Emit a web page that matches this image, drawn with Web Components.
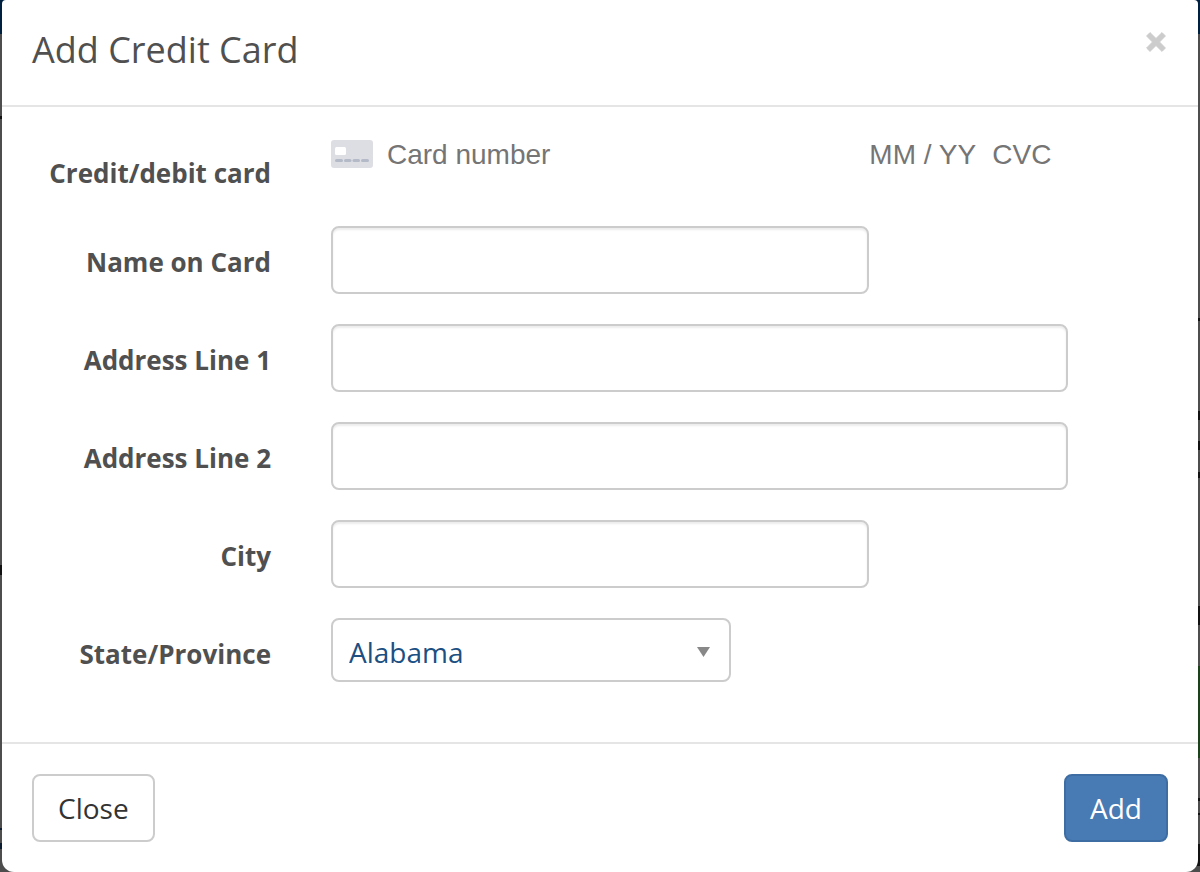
<!DOCTYPE html>
<html lang="en">
<head>
  <meta charset="utf-8">
  <meta name="viewport" content="width=device-width, initial-scale=1">
  <title>Add Credit Card</title>
  <style>
    body {
      margin: 0;
      padding: 0 2px;
      font-family: "Open Sans", sans-serif;
      color: #505050;
      background:
        linear-gradient(#00203f 0 34px, #4d4d4d 34px 116px, #111 116px 119px, #4d4d4d 119px 565px, #111 565px 575px, #4d4d4d 575px 828px, #0c1c30 828px 830px, #4d4d4d 830px 843px, #0c1c30 843px 849px, #4d4d4d 849px) left / 50% 100% no-repeat,
        linear-gradient(#00203f 0 34px, #4d4d4d 34px 318px, #111 318px 321px, #4d4d4d 321px 411px, #111 411px 420px, #4d4d4d 420px 441px, #111 441px 450px, #4d4d4d 450px 472px, #111 472px 478px, #4d4d4d 478px 606px, #111 606px 625px, #4d4d4d 625px 666px, #1d401d 666px 758px, #4d4d4d 758px 798px, #111 798px 801px, #4d4d4d 801px 813px, #111 813px 815px, #4d4d4d 815px 844px, #111 844px 866px, #4d4d4d 866px) right / 50% 100% no-repeat,
        #4d4d4d;
    }
  </style>
</head>
<body>
  <modal-dialog heading="Add Credit Card">
    <form-row label="Credit/debit card" span="8">
      <card-input></card-input>
    </form-row>
    <form-row label="Name on Card" span="6">
      <text-field label="Name on Card"></text-field>
    </form-row>
    <form-row label="Address Line 1" span="8">
      <text-field label="Address Line 1"></text-field>
    </form-row>
    <form-row label="Address Line 2" span="8">
      <text-field label="Address Line 2"></text-field>
    </form-row>
    <form-row label="City" span="6">
      <text-field label="City"></text-field>
    </form-row>
    <form-row label="State/Province" span="8">
      <select-field label="State/Province" options="Alabama,Alaska,Arizona,Arkansas,California"></select-field>
    </form-row>
    <modal-button slot="footer">Close</modal-button>
    <modal-button slot="footer" primary>Add</modal-button>
  </modal-dialog>

  <script>
    class ModalDialog extends HTMLElement {
      constructor() {
        super();
        this.attachShadow({ mode: 'open' });
      }

      connectedCallback() {
        this.shadowRoot.innerHTML = `
          <style>
            :host {
              display: block;
              background: #fff;
              border-radius: 4px 4px 12px 12px;
            }
            header {
              display: flex;
              justify-content: space-between;
              align-items: flex-start;
              padding: 24px 30px 29px;
              border-bottom: 2px solid #e5e5e5;
            }
            h1 {
              margin: 0;
              font-size: 36px;
              font-weight: 400;
              line-height: 52px;
            }
            .dismiss {
              display: flex;
              margin: 8px 2px 0 0;
              padding: 0;
              border: 0;
              background: none;
              cursor: pointer;
            }
            main {
              display: flex;
              flex-direction: column;
              gap: 30px;
              padding: 30px 0 60px;
            }
            footer {
              display: flex;
              justify-content: space-between;
              padding: 30px;
              border-top: 2px solid #e5e5e5;
            }
          </style>

          <section role="dialog" aria-labelledby="title">
            <header>
              <h1 id="title">${this.getAttribute('heading')}</h1>
              <button class="dismiss" type="button" aria-label="Close">
                <svg width="20" height="20" viewBox="0 0 20 20">
                  <path d="M4 0.6 10 6.5 16 0.6 19.4 4 13.5 10 19.4 16 16 19.4 10 13.5 4 19.4 0.6 16 6.5 10 0.6 4Z" fill="#ccc" stroke="#ccc" stroke-linejoin="round"/>
                </svg>
              </button>
            </header>
            <main><slot></slot></main>
            <footer><slot name="footer"></slot></footer>
          </section>
        `;
      }
    }

    // Twelve column row: label in the first three, the field in the next ones
    class FormRow extends HTMLElement {
      constructor() {
        super();
        this.attachShadow({ mode: 'open' });
      }

      connectedCallback() {
        this.shadowRoot.innerHTML = `
          <style>
            :host {
              display: grid;
              grid-template-columns: repeat(12, minmax(0, 1fr));
            }
            label {
              grid-column: span 3;
              padding: 14px 30px 0;
              font-size: 26px;
              font-weight: 700;
              line-height: 45px;
              text-align: right;
              white-space: nowrap;
            }
            .field {
              grid-column: span ${this.getAttribute('span')};
              padding: 0 30px;
            }
          </style>

          <label>${this.getAttribute('label')}</label>
          <div class="field"><slot></slot></div>
        `;
        // the control sits in another shadow root, so the click is passed on
        this.shadowRoot.querySelector('label').addEventListener('click', () => {
          this.firstElementChild.focus();
        });
      }
    }

    class TextField extends HTMLElement {
      constructor() {
        super();
        this.attachShadow({ mode: 'open', delegatesFocus: true });
      }

      connectedCallback() {
        this.shadowRoot.innerHTML = `
          <style>
            :host {
              display: block;
            }
            input {
              display: block;
              box-sizing: border-box;
              width: 100%;
              height: 68px;
              padding: 12px 16px;
              border: 2px solid #ccc;
              border-radius: 8px;
              background: #fff;
              box-shadow: inset 0 2px 2px rgba(0, 0, 0, 0.075);
              color: #1c4f82;
              font: 28px "Open Sans", sans-serif;
            }
          </style>

          <input type="text" aria-label="${this.getAttribute('label')}">
        `;
      }
    }

    class SelectField extends HTMLElement {
      constructor() {
        super();
        this.attachShadow({ mode: 'open', delegatesFocus: true });
      }

      connectedCallback() {
        const options = this.getAttribute('options').split(',');
        this.shadowRoot.innerHTML = `
          <style>
            :host {
              display: grid;
              align-items: center;
              max-width: 400px;
            }
            select, svg {
              grid-area: 1 / 1;
            }
            select {
              appearance: none;
              box-sizing: border-box;
              width: 100%;
              height: 64px;
              padding: 4px 16px 0;
              border: 2px solid #ccc;
              border-radius: 8px;
              background: #fff;
              color: #1c4f82;
              font: 28px "Open Sans", sans-serif;
            }
            svg {
              justify-self: end;
              margin: 4px 21px 0 0;
              pointer-events: none;
            }
          </style>

          <select aria-label="${this.getAttribute('label')}">
            ${options.map((name) => `<option>${name}</option>`).join('')}
          </select>
          <svg width="13" height="10" viewBox="0 0 13 10">
            <path d="M0 0H13L6.5 10Z" fill="#888"/>
          </svg>
        `;
      }
    }

    class CardInput extends HTMLElement {
      constructor() {
        super();
        this.attachShadow({ mode: 'open', delegatesFocus: true });
      }

      connectedCallback() {
        this.shadowRoot.innerHTML = `
          <style>
            :host {
              display: flex;
              align-items: center;
              height: 34px;
            }
            svg {
              flex: none;
              margin-right: 14px;
            }
            input {
              box-sizing: border-box;
              min-width: 0;
              height: 34px;
              padding: 2px 0 0;
              border: 0;
              background: none;
              color: #32325d;
              font: 28px "Liberation Sans", Arial, sans-serif;
            }
            input::placeholder {
              color: #757575;
            }
            .number {
              flex: 1;
            }
            .expiry {
              width: 123px;
            }
            .cvc {
              width: 76px;
            }
          </style>

          <svg width="42" height="28" viewBox="0 0 42 28">
            <rect width="42" height="28" rx="3" fill="#dddee4"/>
            <rect x="4" y="7" width="11" height="8" rx="1.5" fill="#fff"/>
            <g fill="#b4bac8">
              <rect x="4" y="19" width="8" height="3" rx="1.5"/>
              <rect x="13" y="19" width="7.5" height="3" rx="1.5"/>
              <rect x="21.5" y="19" width="7.5" height="3" rx="1.5"/>
              <rect x="30" y="19" width="8" height="3" rx="1.5"/>
            </g>
          </svg>
          <input class="number" type="text" inputmode="numeric" placeholder="Card number" aria-label="Credit/debit card number">
          <input class="expiry" type="text" inputmode="numeric" placeholder="MM / YY" aria-label="Expiry date">
          <input class="cvc" type="text" inputmode="numeric" placeholder="CVC" aria-label="Security code">
        `;
      }
    }

    class ModalButton extends HTMLElement {
      constructor() {
        super();
        this.attachShadow({ mode: 'open' });
      }

      connectedCallback() {
        this.shadowRoot.innerHTML = `
          <style>
            :host {
              display: block;
            }
            button {
              display: block;
              height: 68px;
              padding: 0 24px;
              border: 2px solid #ccc;
              border-radius: 8px;
              background: #fff;
              color: #333;
              font: 28px "Open Sans", sans-serif;
              cursor: pointer;
            }
            :host([primary]) button {
              border-color: #3e6da3;
              background: #487ab4;
              color: #fff;
            }
          </style>

          <button type="button"><slot></slot></button>
        `;
      }
    }

    customElements.define('modal-dialog', ModalDialog);
    customElements.define('form-row', FormRow);
    customElements.define('text-field', TextField);
    customElements.define('select-field', SelectField);
    customElements.define('card-input', CardInput);
    customElements.define('modal-button', ModalButton);
  </script>
</body>
</html>
